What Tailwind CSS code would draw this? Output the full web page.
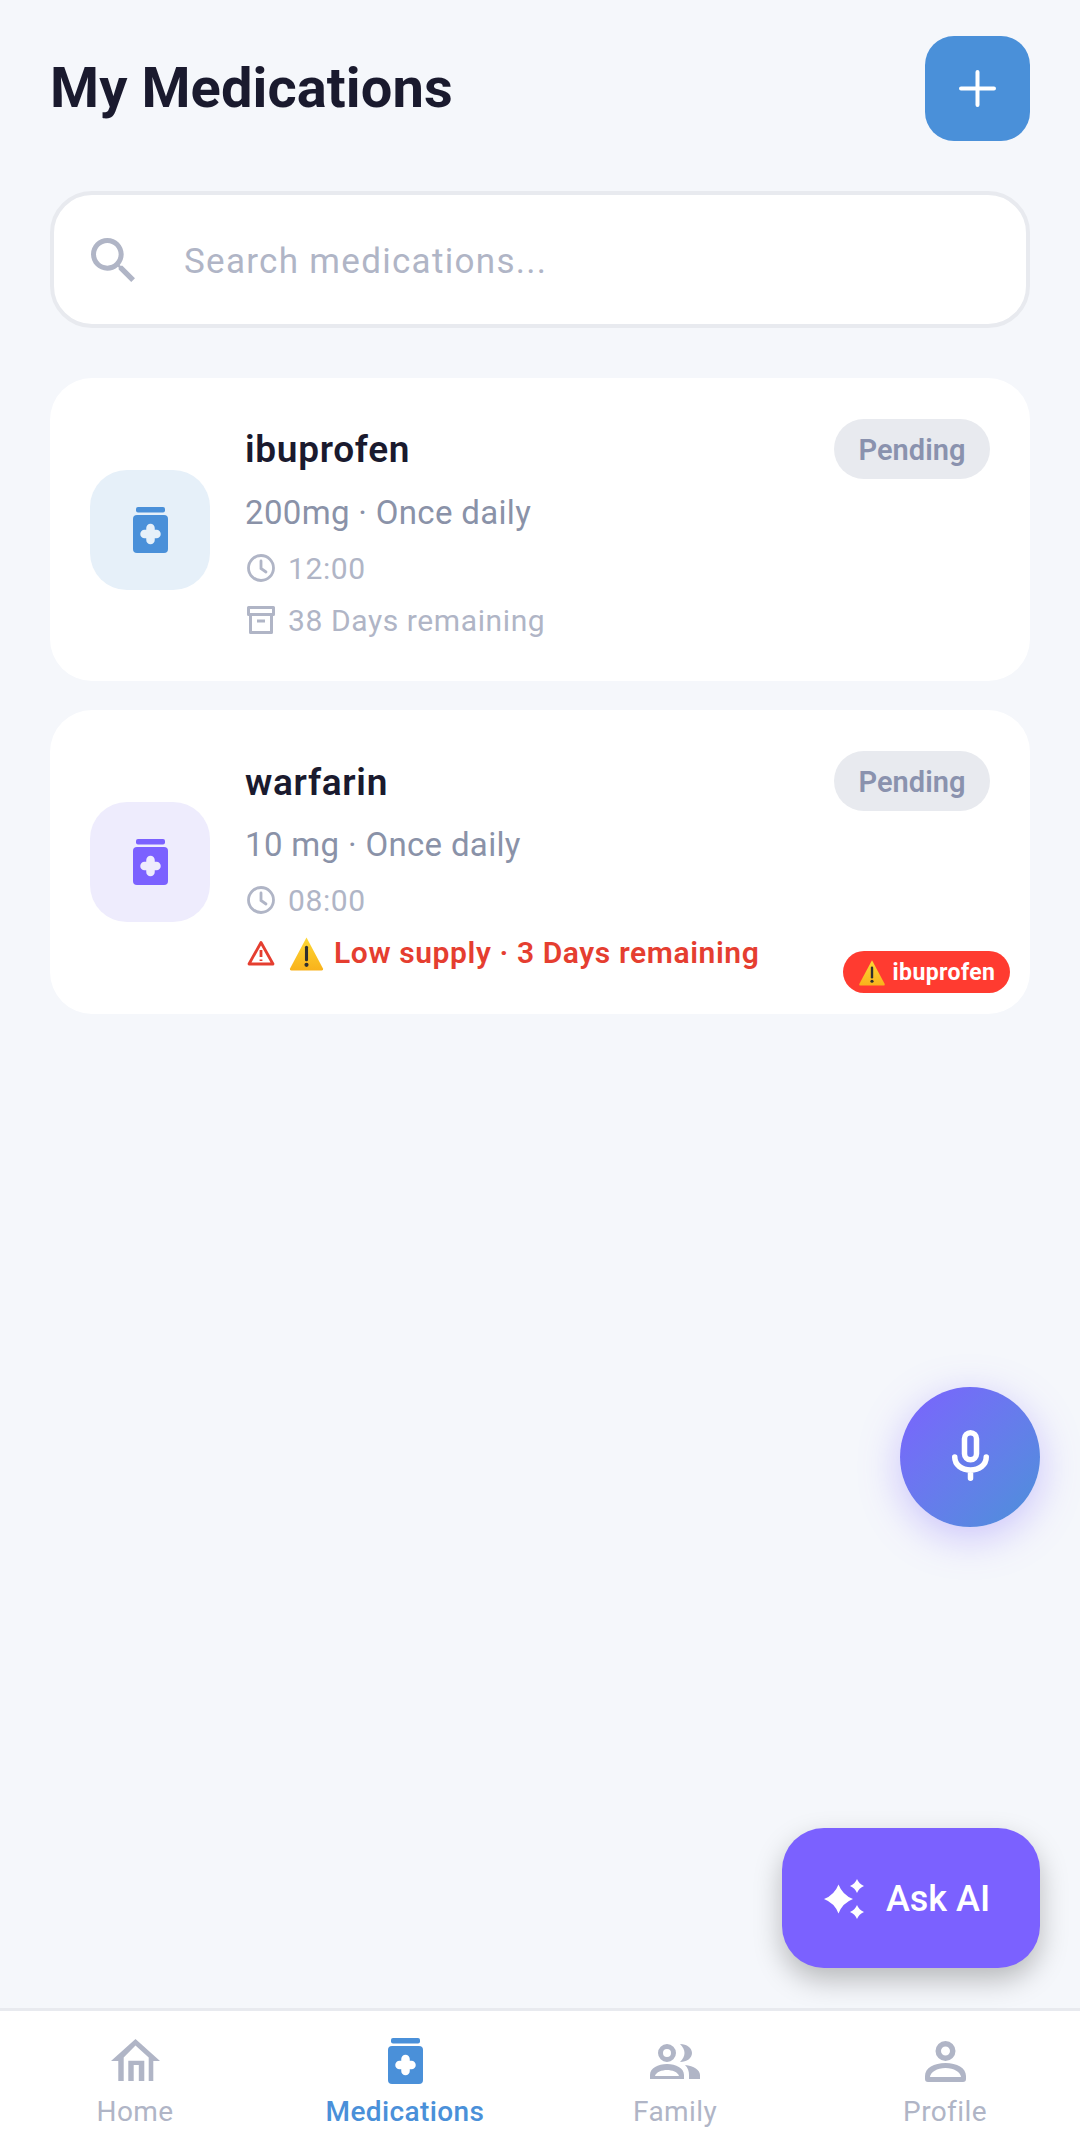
<!DOCTYPE html>
<html lang="en">
<head>
  <meta charset="UTF-8" />
  <meta name="viewport" content="width=device-width, initial-scale=1.0"/>
  <title>My Medications</title>
  <script src="https://cdn.jsdelivr.net/npm/@tailwindcss/browser@4"></script>
</head>
<body class="bg-[#f5f7fb] font-['Roboto',sans-serif]">
  <div class="relative w-[1080px] h-[2146px] flex flex-col overflow-hidden">

    <main class="flex-1 px-[50px] pt-[36px]">
      <!-- Header -->
      <div class="flex items-center justify-between">
        <h1 class="text-[56px] font-bold text-[#1a1a2e] leading-none tracking-[0.1px] mb-[2px]">My Medications</h1>
        <button class="w-[105px] h-[105px] rounded-[29px] bg-[#4a90d9] flex items-center justify-center">
          <svg width="37" height="37" viewBox="0 0 37 37" fill="none" stroke="white" stroke-width="4" stroke-linecap="round"><path d="M18.5 2v33M2 18.5h33"/></svg>
        </button>
      </div>

      <!-- Search -->
      <div class="mt-[50px] h-[137px] bg-white border-[4px] border-[#e8eaef] rounded-[42px] flex items-center pl-[37px]">
        <svg width="44" height="44" viewBox="3 3 17.5 17.5" fill="#b0b5c6"><path d="M15.5 14h-.79l-.28-.27C15.41 12.59 16 11.11 16 9.5 16 5.91 13.09 3 9.5 3S3 5.91 3 9.5 5.91 16 9.5 16c1.61 0 3.09-.59 4.23-1.57l.27.28v.79l5 4.99L20.49 19l-4.99-5zm-6 0C7.01 14 5 11.99 5 9.5S7.01 5 9.5 5 14 7.01 14 9.5 11.99 14 9.5 14z"/></svg>
        <span class="ml-[49px] text-[35px] tracking-[1.3px] text-[#b0b5c6] mt-[5px]">Search medications...</span>
      </div>

      <!-- Cards -->
      <div class="mt-[50px] flex flex-col gap-[29px]">
        <div class="relative h-[303px] bg-white rounded-[42px] flex items-center px-[40px]">
          <div class="w-[120px] h-[120px] rounded-[37px] bg-[#e6f0f9] flex items-center justify-center shrink-0">
            <svg width="35" height="46" viewBox="0 0 35 46"><rect x="3" width="29" height="5.5" rx="2" fill="#4a90d9"/><rect y="8" width="35" height="38" rx="4" fill="#4a90d9"/><path d="M17.5 21v12M11.5 27h12" stroke="#e6f0f9" stroke-width="8.5" stroke-linecap="round"/></svg>
          </div>
          <div class="ml-[35px] flex-1 self-start pt-[50px]">
            <div class="text-[37px] leading-[44px] font-semibold text-[#1a1a2e] tracking-[0.7px]">ibuprofen</div>
            <div class="mt-[21px] text-[33px] leading-[40px] text-[#8a92a8] tracking-[0.33px]">200mg · Once daily</div>
            <div class="mt-[17px] flex items-center text-[30px] leading-[38px] text-[#b0b5c6] tracking-[0.6px]">
              <svg class="ml-[2px] mr-[13px] mb-[3px]" width="28" height="28" viewBox="0 0 28 28" fill="none" stroke="#b0b5c6" stroke-width="2.8"><circle cx="14" cy="14" r="12.5"/><path d="M14 7v7.5l5 3.5" stroke-linecap="round"/></svg>12:00
            </div>
            <div class="mt-[14px] flex items-center text-[30px] leading-[38px] text-[#b0b5c6] tracking-[0.6px]">
              <svg class="ml-[2px] mr-[13px] mb-[2px]" width="28" height="28" viewBox="0 0 28 28" fill="none" stroke="#b0b5c6" stroke-width="3" stroke-linejoin="round"><path d="M1.5 1.5h25v7h-25zM3.5 8.5v18h21v-18M10 15h8"/></svg>38 Days remaining
            </div>
          </div>
          <span class="absolute top-[41px] right-[40px] w-[156px] h-[60px] pt-[3px] rounded-full bg-[#e8eaef] flex items-center justify-center text-[29px] font-semibold text-[#8a92ae]">Pending</span>
        </div>

        <div class="relative h-[304px] bg-white rounded-[42px] flex items-center px-[40px]">
          <div class="w-[120px] h-[120px] rounded-[37px] bg-[#eeecfd] flex items-center justify-center shrink-0">
            <svg width="35" height="46" viewBox="0 0 35 46"><rect x="3" width="29" height="5.5" rx="2" fill="#7b61ff"/><rect y="8" width="35" height="38" rx="4" fill="#7b61ff"/><path d="M17.5 21v12M11.5 27h12" stroke="#eeecfd" stroke-width="8.5" stroke-linecap="round"/></svg>
          </div>
          <div class="ml-[35px] flex-1 self-start pt-[50px]">
            <div class="text-[37px] leading-[44px] font-semibold text-[#1a1a2e] tracking-[0.7px] pt-[1px] -mb-[1px]">warfarin</div>
            <div class="mt-[21px] text-[33px] leading-[40px] text-[#8a92a8] tracking-[0.33px]">10 mg · Once daily</div>
            <div class="mt-[17px] flex items-center text-[30px] leading-[38px] text-[#b0b5c6] tracking-[0.6px]">
              <svg class="ml-[2px] mr-[13px] mb-[3px]" width="28" height="28" viewBox="0 0 28 28" fill="none" stroke="#b0b5c6" stroke-width="2.8"><circle cx="14" cy="14" r="12.5"/><path d="M14 7v7.5l5 3.5" stroke-linecap="round"/></svg>08:00
            </div>
            <div class="mt-[14px] flex items-center text-[30px] leading-[38px] font-semibold text-[#e53e30] tracking-[0.6px]">
              <svg class="ml-[2px] mr-[13px]" width="28" height="26" viewBox="0 0 28 26" fill="none" stroke="#e53e30" stroke-width="2.8" stroke-linejoin="round"><path d="M14 2.5L26 24H2z"/><path d="M14 10v7M14 19.5v1.5"/></svg>
              <svg class="mr-[9px]" width="37" height="35" viewBox="0 0 34 34"><defs><linearGradient id="warn" x1="0" y1="0" x2="0" y2="1"><stop offset="0" stop-color="#fdd835"/><stop offset="1" stop-color="#f9b21b"/></linearGradient></defs><path d="M17 1.5L33 31.5a1.5 1.5 0 0 1-1.3 2H2.3a1.5 1.5 0 0 1-1.3-2z" fill="url(#warn)"/><path d="M17 11v12" stroke="#2f2f2f" stroke-width="3" stroke-linecap="round"/><circle cx="17" cy="28" r="2" fill="#2f2f2f"/></svg>
              Low supply · 3 Days remaining
            </div>
          </div>
          <span class="absolute top-[41px] right-[40px] w-[156px] h-[60px] pt-[3px] rounded-full bg-[#e8eaef] flex items-center justify-center text-[29px] font-semibold text-[#8a92ae]">Pending</span>
          <span class="absolute top-[241px] right-[20px] w-[167px] h-[42px] rounded-full bg-[#ff3b30] flex items-center justify-center text-[23px] font-bold text-white tracking-[0.4px]">
            <svg class="mr-[7px]" width="28" height="27" viewBox="0 0 34 34"><path d="M17 1.5L33 31.5a1.5 1.5 0 0 1-1.3 2H2.3a1.5 1.5 0 0 1-1.3-2z" fill="url(#warn)"/><path d="M17 11v12" stroke="#2f2f2f" stroke-width="3" stroke-linecap="round"/><circle cx="17" cy="28" r="2" fill="#2f2f2f"/></svg>
            <span class="pt-[3px]">ibuprofen</span>
          </span>
        </div>
      </div>
    </main>

    <!-- Bottom nav -->
    <nav class="h-[138px] bg-white border-t-[3px] border-[#e8eaef] grid grid-cols-4 text-[28px] text-[#b0b5c6] tracking-[0.4px]">
      <div class="flex flex-col items-center pt-[27px]">
        <div class="h-[46px] flex items-center">
          <svg class="mb-[2px]" width="49" height="42" viewBox="0 0 49 42" fill="#b0b5c6"><path fill-rule="evenodd" d="M24.5 0L49 22H42.3V42H7.3V22H0zM24.5 6.5L12.7 18.5V42H17.3V21.7H33.3V42H37.7V18.5zM22.7 26H27.8V42H22.7z"/></svg>
        </div>
        <span class="mt-[10px] leading-[36px]">Home</span>
      </div>
      <div class="flex flex-col items-center pt-[27px] text-[#4a90d9] font-medium">
        <svg width="35" height="46" viewBox="0 0 35 46"><rect x="3" width="29" height="5.5" rx="2" fill="#4a90d9"/><rect y="8" width="35" height="38" rx="4" fill="#4a90d9"/><path d="M17.5 21v12M11.5 27h12" stroke="#fff" stroke-width="8.5" stroke-linecap="round"/></svg>
        <span class="mt-[10px] leading-[36px]">Medications</span>
      </div>
      <div class="flex flex-col items-center pt-[27px]">
        <div class="h-[46px] flex items-center">
          <svg width="50" height="35" viewBox="0 0 50 35" fill="#b0b5c6"><path fill-rule="evenodd" d="M17 0a9 9 0 1 1 0 18 9 9 0 0 1 0-18zm0 5a4 4 0 1 0 0 8 4 4 0 0 0 0-8z"/><path d="M30 0C37 0 42 4 42 9S37 18 30 18C33 15 34.5 12 34.5 9S33 3 30 0z"/><path fill-rule="evenodd" d="M0 35V31C0 24 8 20 17 20S34 24 34 31V35zM5 32H29C28 28 22 26 17 26S6 28 5 32z"/><path d="M35 21C44 22 50 26 50 31V35H39V31C39 27 38 24 35 21z"/></svg>
        </div>
        <span class="mt-[10px] leading-[36px]">Family</span>
      </div>
      <div class="flex flex-col items-center pt-[27px]">
        <div class="h-[46px] flex items-center">
          <svg width="41" height="41" viewBox="0 0 41 41" fill="#b0b5c6"><path fill-rule="evenodd" d="M20.5 0a10 10 0 1 1 0 20 10 10 0 0 1 0-20zm0 5.5a4.5 4.5 0 1 0 0 9 4.5 4.5 0 0 0 0-9z"/><path fill-rule="evenodd" d="M0 35C0 27 9 22 20.5 22S41 27 41 35V38a3 3 0 0 1-3 3H3a3 3 0 0 1-3-3zM5 36H36C35.5 31 29 27 20.5 27S5.5 31 5 36z"/></svg>
        </div>
        <span class="mt-[10px] leading-[36px]">Profile</span>
      </div>
    </nav>

    <!-- Floating buttons -->
    <button class="absolute left-[900px] top-[1387px] w-[140px] h-[140px] rounded-full bg-gradient-to-br from-[#7b61ff] to-[#4a90d9] shadow-[0_10px_40px_rgba(123,97,255,0.35)] flex items-center justify-center">
      <svg class="mb-[4px]" width="37" height="51" viewBox="0 0 37 51" fill="none" stroke="white" stroke-width="5.5" stroke-linecap="round"><rect x="12.5" y="2.75" width="12" height="27" rx="6"/><path d="M2.75 27c0 8 7 13 15.75 13s15.75-5 15.75-13M18.5 40v8.25"/></svg>
    </button>
    <button class="absolute left-[782px] top-[1828px] w-[258px] h-[140px] rounded-[42px] bg-[#7b61ff] shadow-[0_12px_28px_rgba(0,0,0,0.25)] flex items-center justify-center pr-[8px] pt-[2px] text-white text-[36px] font-medium">
      <svg class="mr-[22px]" width="40" height="40" viewBox="0 0 40 40" fill="white"><path d="M14.5 5.5Q18.500 16 29 20Q18.500 24 14.500 34.500Q10.500 24 0 20Q10.500 16 14.500 5.500z"/><path d="M33 0Q35 5 40 7Q35 9 33 14Q31 9 26 7Q31 5 33 0z"/><path d="M33 26Q35 31 40 33Q35 35 33 40Q31 35 26 33Q31 31 33 26z"/></svg>
      Ask AI
    </button>
  </div>
</body>
</html>
